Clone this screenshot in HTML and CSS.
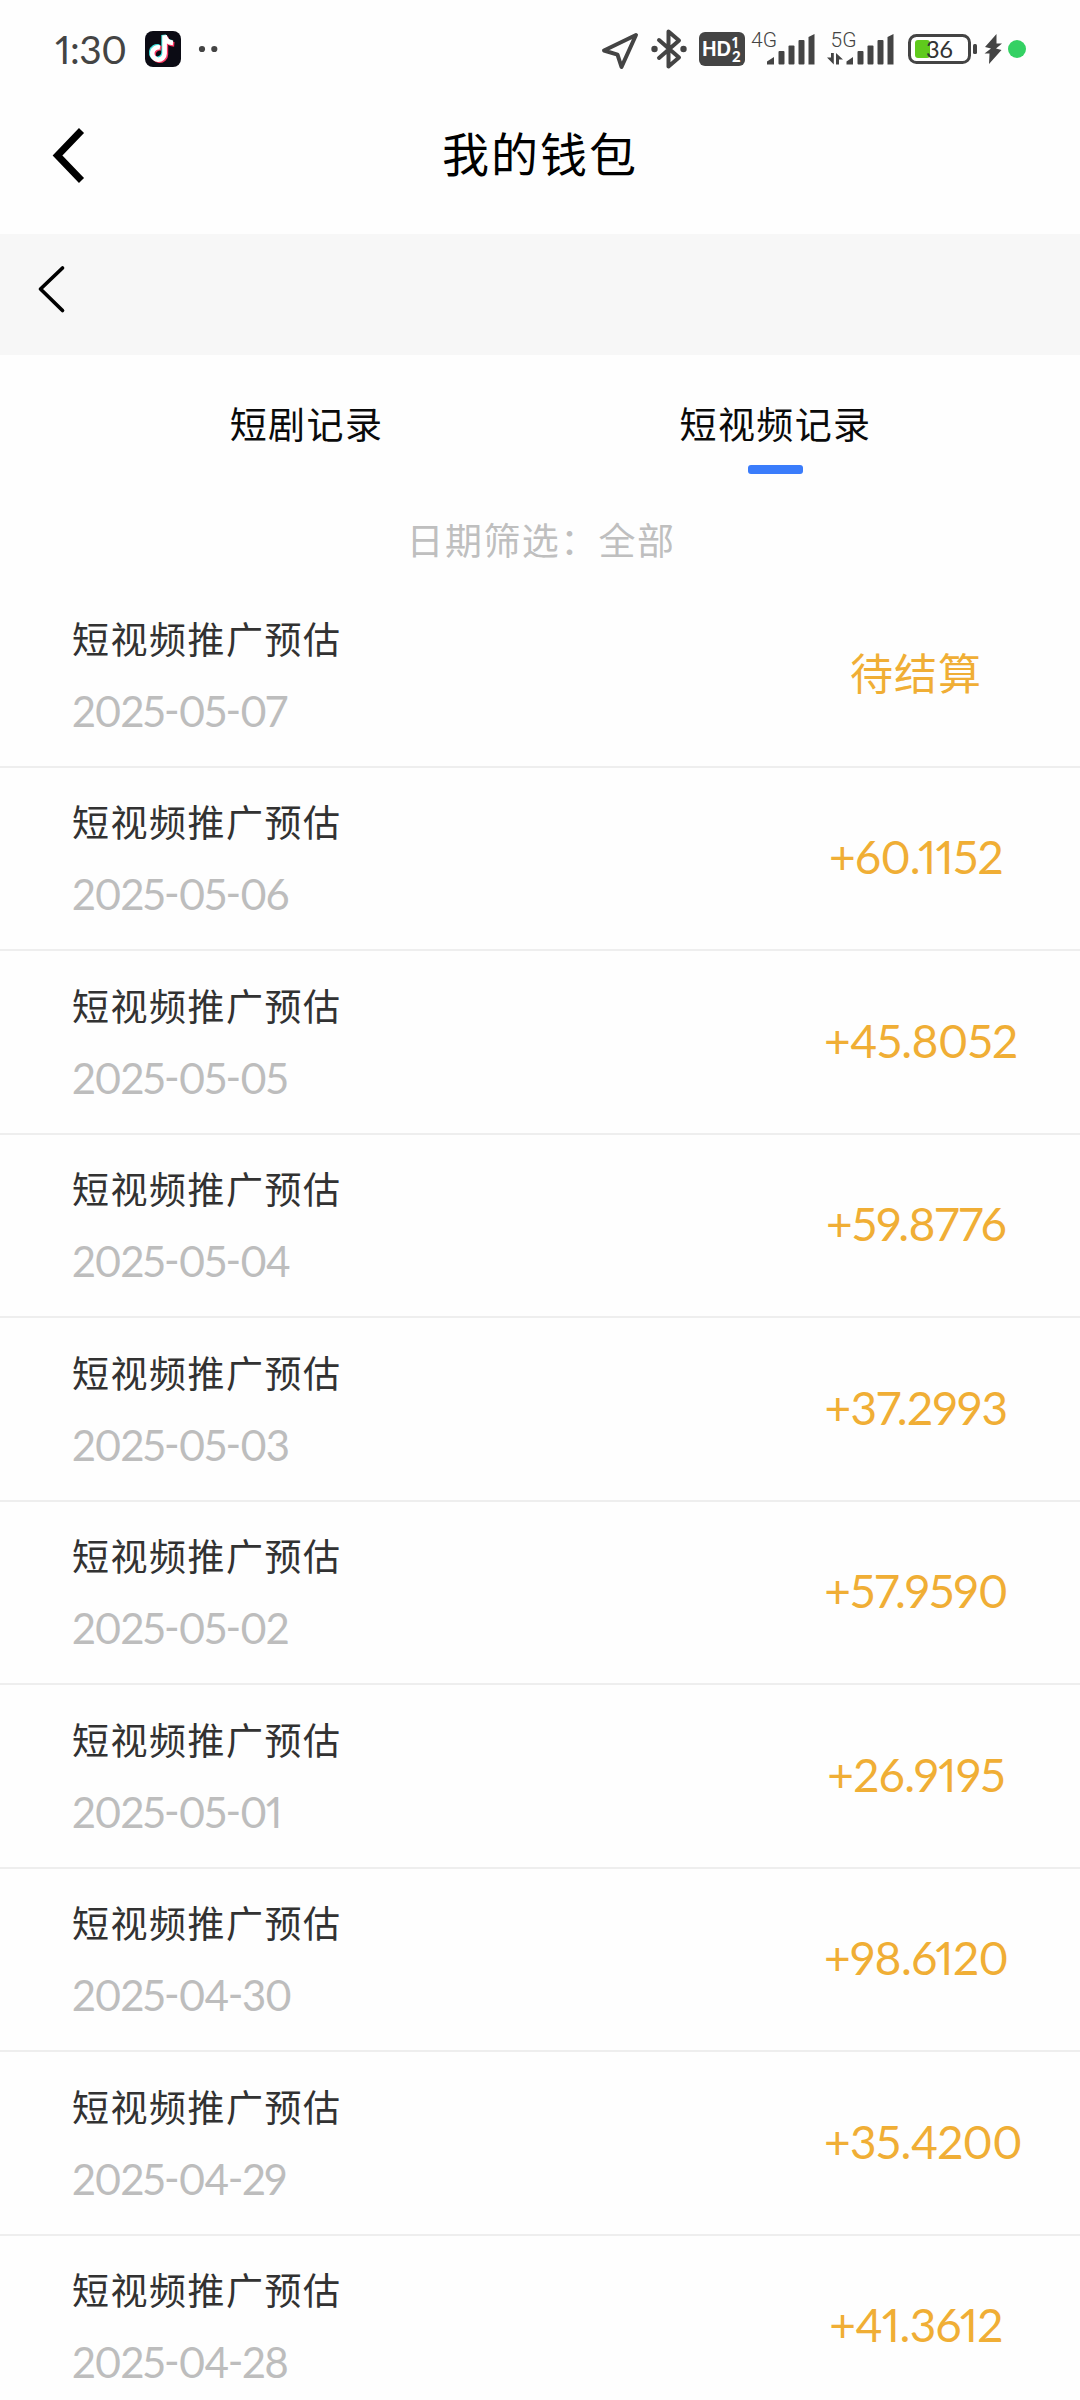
FILE: index.html
```html
<!DOCTYPE html>
<html lang="zh-CN">
<head>
<meta charset="utf-8">
<title>我的钱包</title>
<link rel="stylesheet" href="styles.css">
</head>
<body>
<header class="status">
  <span class="clock">1:30</span>
  <svg class="app" viewBox="0 0 36 36"><rect width="36" height="36" rx="8" fill="#0b0b14"/><g fill="none" stroke-width="4.6"><path d="M15 16.5a6.2 6.2 0 1 0 4.6 6V5c.7 4 3.6 7 8.400 7.400" stroke="#3fe0dc" transform="translate(-1 -1)"/><path d="M15 16.500a6.200 6.200 0 1 0 4.600 6V5c.7 4 3.600 7 8.400 7.400" stroke="#fb3a63" transform="translate(1.300 1)"/><path d="M15 16.500a6.200 6.200 0 1 0 4.600 6V4.500c.7 4 3.600 7 8.400 7.400" stroke="#fff"/></g></svg>
  <svg class="more" viewBox="0 0 20 8" fill="#444"><circle cx="4" cy="4" r="3.100"/><circle cx="16.300" cy="4" r="3.100"/></svg>
  <div class="signals">
    <svg class="nav-icon" viewBox="0 0 38 38"><path d="M35 3 3 18.500l13.500 4.200 4 12.300z" fill="none" stroke="#444" stroke-width="4" stroke-linejoin="round"/></svg>
    <svg class="bt-icon" viewBox="0 0 36 40"><path d="M8 11l20 17.500-10.500 9V2.500l10.500 9L8 29" fill="none" stroke="#444" stroke-width="4" stroke-linejoin="round" stroke-linecap="round"/><circle cx="3.500" cy="20" r="3.200" fill="#444"/><circle cx="32.500" cy="20" r="3.200" fill="#444"/></svg>
    <svg class="hd-icon" viewBox="0 0 46 34"><rect width="46" height="34" rx="6" fill="#444"/><g fill="#fff" font-family="Lato, sans-serif" font-weight="900"><text x="3" y="24" font-size="20.500" textLength="29" lengthAdjust="spacingAndGlyphs">HD</text><text x="33" y="15.500" font-size="15">1</text><text x="33" y="30" font-size="15">2</text></g></svg>
    <svg class="cell-icon" viewBox="0 0 64 36"><text class="net" x="0" y="16" textLength="26" lengthAdjust="spacingAndGlyphs">4G</text><g fill="#444"><path d="M16 30.500l7-4.500v7.500h-7z"/><rect x="27.500" y="20" width="6" height="13.500" rx="1"/><rect x="37.500" y="14.500" width="6" height="19" rx="1"/><rect x="47.500" y="9" width="6" height="24.500" rx="1"/><path d="M57.500 6l6-3v30.500h-6z"/></g></svg>
    <svg class="cell5-icon" viewBox="0 0 68 36"><text class="net" x="3.500" y="16" textLength="26" lengthAdjust="spacingAndGlyphs">5G</text><g fill="#444"><path d="M4 22h2.800v11.500L0 26.500h4zM9 33.500V22l7 6.500h-4v5z"/><path d="M19.500 30.500l6.500-4.500v7.500h-6.500z"/><rect x="30.500" y="20" width="6" height="13.500" rx="1"/><rect x="40.500" y="14.500" width="6" height="19" rx="1"/><rect x="50.500" y="9" width="6" height="24.500" rx="1"/><path d="M60.500 6l6-3v30.500h-6z"/></g></svg>
    <svg class="bat-icon" viewBox="0 0 70 30"><rect x="1.500" y="1.500" width="60" height="27" rx="7" fill="#fff" stroke="#444" stroke-width="3"/><rect x="7" y="6" width="15" height="18" rx="3" fill="#5fca1c"/><rect x="65" y="10" width="4" height="10" rx="1.500" fill="#444"/><text x="18" y="24" font-size="24" font-family="Lato, sans-serif" fill="#333" textLength="27" lengthAdjust="spacingAndGlyphs">36</text></svg>
    <svg class="bolt-icon" viewBox="0 0 18 30"><path d="M12.500 0L1 13l6 1.500-6.500 5h5L5 30l12.500-14-5.500-1.500 6-5h-5.500z" fill="#444"/></svg>
    <i class="live"></i>
  </div>
</header>
<nav class="titlebar">
  <svg class="back" viewBox="0 0 34 58"><path d="M29.500 3.500L5.500 28.500l24 25" fill="none" stroke="#000" stroke-width="7"/></svg>
  <h1>我的钱包</h1>
</nav>
<div class="subbar"><svg class="back-thin" viewBox="0 0 28 48"><path d="M24.500 3L2.500 24l22 21.500" fill="none" stroke="#000" stroke-width="3.700" stroke-linecap="round" stroke-linejoin="round"/></svg></div>
<div class="tabs">
  <div class="tab"><span>短剧记录</span></div>
  <div class="tab active"><span>短视频记录</span></div>
</div>
<div class="filter">日期筛选：全部</div>
<main class="list">
  <div class="row"><div class="info"><p class="name">短视频推广预估</p><time>2025-05-07</time></div><div class="amount pending">待结算</div></div>
  <div class="row"><div class="info"><p class="name">短视频推广预估</p><time>2025-05-06</time></div><div class="amount">+60.1152</div></div>
  <div class="row"><div class="info"><p class="name">短视频推广预估</p><time>2025-05-05</time></div><div class="amount">+45.8052</div></div>
  <div class="row"><div class="info"><p class="name">短视频推广预估</p><time>2025-05-04</time></div><div class="amount">+59.8776</div></div>
  <div class="row"><div class="info"><p class="name">短视频推广预估</p><time>2025-05-03</time></div><div class="amount">+37.2993</div></div>
  <div class="row"><div class="info"><p class="name">短视频推广预估</p><time>2025-05-02</time></div><div class="amount">+57.9590</div></div>
  <div class="row"><div class="info"><p class="name">短视频推广预估</p><time>2025-05-01</time></div><div class="amount">+26.9195</div></div>
  <div class="row"><div class="info"><p class="name">短视频推广预估</p><time>2025-04-30</time></div><div class="amount">+98.6120</div></div>
  <div class="row"><div class="info"><p class="name">短视频推广预估</p><time>2025-04-29</time></div><div class="amount">+35.4200</div></div>
  <div class="row"><div class="info"><p class="name">短视频推广预估</p><time>2025-04-28</time></div><div class="amount">+41.3612</div></div>
</main>
</body>
</html>
```
FILE: styles.css
```css
* { box-sizing: border-box; }
html { background: #fefefe; }
body {
  margin: 0;
  width: 1080px;
  height: 2400px;
  overflow: hidden;
  background: #fefefe;
  font-family: Lato, "Noto Sans CJK SC", sans-serif;
  font-feature-settings: "pnum", "case";
}
svg { display: block; flex: none; overflow: visible; }
.status { height: 98px; display: flex; align-items: center; padding: 0 54px 0 55px; }
.clock { width: 90px; font-size: 39px; line-height: 50px; letter-spacing: -0.5px; color: #444; white-space: nowrap; }
.app { width: 36px; height: 36px; }
.more { width: 20px; height: 8px; margin-left: 17px; }
.signals { margin-left: auto; display: flex; align-items: center; }
.nav-icon { width: 38px; height: 38px; margin-top: 3px; }
.bt-icon { width: 36px; height: 40px; margin-left: 12px; }
.hd-icon { width: 46px; height: 34px; margin-left: 12px; }
.cell-icon { width: 64px; height: 36px; margin-left: 6px; }
.cell5-icon { width: 68px; height: 36px; margin-left: 12px; }
.net { font: 300 20px Roboto, sans-serif; fill: #444; }
.bat-icon { width: 70px; height: 30px; margin-left: 13px; }
.bolt-icon { width: 18px; height: 30px; margin-left: 6px; }
.live { width: 18px; height: 18px; border-radius: 50%; background: #34d163; margin-left: 6px; }
.titlebar { height: 136px; display: grid; grid-template-columns: 140px 1fr 140px; padding-top: 28px; align-items: start; }
.back { width: 34px; height: 58px; margin: 1px 0 0 52px; }
h1 { margin: -1px 0 0; text-align: center; font-size: 47px; font-weight: 400; line-height: 58px; letter-spacing: 2px; color: #000; }
.subbar { height: 121px; background: #f7f7f7; padding: 31px 38px; }
.back-thin { width: 28px; height: 48px; }
.tabs { height: 120px; display: grid; grid-template-columns: 1fr 1fr; padding: 45px 70px 0 72px; }
.tab { display: flex; flex-direction: column; align-items: center; font-size: 37px; line-height: 50px; letter-spacing: 1.4px; color: #0a0a0a; }
.tab.active::after { content: ""; width: 55px; height: 9px; margin-top: 15px; border-radius: 3px; background: #3a7cfb; }
.filter { height: 109px; padding: 41px 0 0 2px; text-align: center; font-size: 37px; line-height: 50px; letter-spacing: 1.4px; color: #bfbfbf; }
.row { height: 183.5px; display: flex; align-items: center; padding-left: 72px; border-bottom: 2px solid #eee; }
.info { width: 752px; padding-top: 1px; }
.name { margin: 0 0 15px; font-size: 37px; line-height: 56px; letter-spacing: 1.5px; color: #323232; }
time { display: block; font-size: 42px; line-height: 56px; letter-spacing: -1.5px; color: #bdbdbd; }
.amount { width: 184px; margin-top: -2px; text-align: center; white-space: nowrap; font-size: 46px; line-height: 60px; letter-spacing: -0.6px; color: #f0ae35; }
.pending { font-size: 43px; letter-spacing: 1px; }
```
